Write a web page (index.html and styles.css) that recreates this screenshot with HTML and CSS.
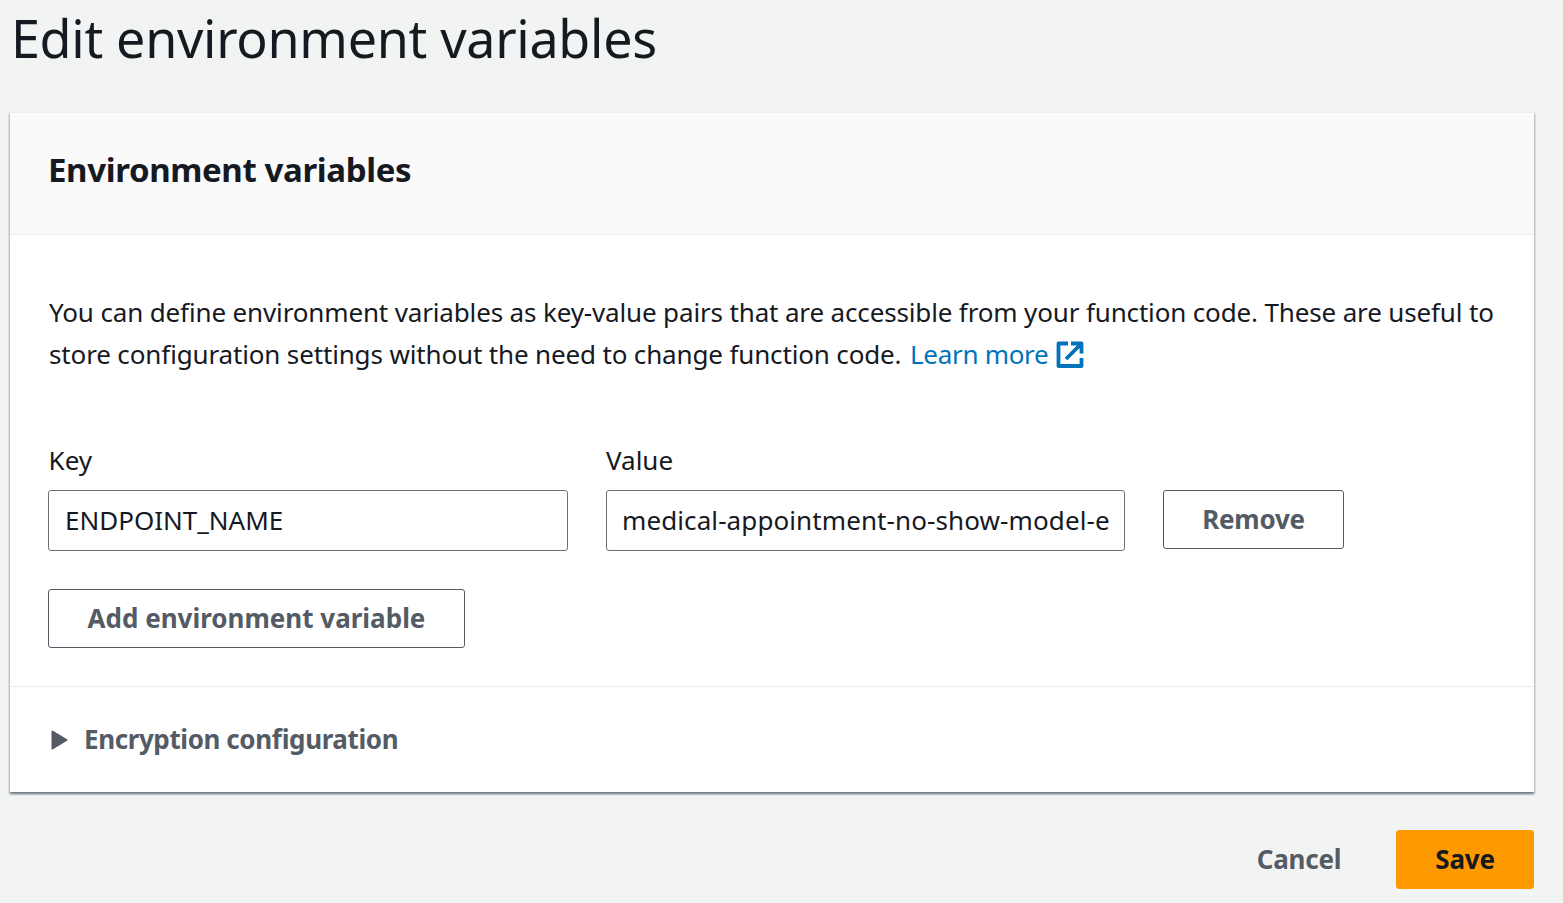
FILE: index.html
```html
<!DOCTYPE html>
<html lang="en">
<head>
<meta charset="utf-8">
<title>Edit environment variables</title>
<link rel="stylesheet" href="styles.css">
</head>
<body>
<main class="page">
  <h1 class="page-title">Edit environment variables</h1>
  <section class="card">
    <header class="card-header"><h2 class="card-title">Environment variables</h2></header>
    <div class="card-body">
      <p class="intro">You can define environment variables as key-value pairs that are accessible from your function code. These are useful to<br>store configuration settings without the need to change function code. <a class="link" href="#">Learn more</a><svg class="external" viewBox="0 0 28 28" aria-hidden="true"><path d="M12 2.5H2.5v22.5H25.5V17M15 2.5H25.5V12.5M25 3L10 18" fill="none" stroke="currentColor" stroke-width="3.8" stroke-linejoin="round"/></svg></p>
      <div class="row">
        <label class="field"><span class="label label-key">Key</span><input class="input" value="ENDPOINT_NAME"></label>
        <label class="field"><span class="label">Value</span><input class="input input-value" value="medical-appointment-no-show-model-e"></label>
        <button class="button remove">Remove</button>
      </div>
      <button class="button add">Add environment variable</button>
    </div>
    <div class="encryption"><svg class="caret" viewBox="0 0 17 20" aria-hidden="true"><path d="M1.5 1.5L15.5 10L1.5 18.5Z" fill="currentColor" stroke="currentColor" stroke-width="2" stroke-linejoin="round"/></svg><span class="encryption-label">Encryption configuration</span></div>
  </section>
  <footer class="actions"><button class="button cancel">Cancel</button><button class="button save">Save</button></footer>
</main>
</body>
</html>
```
FILE: styles.css
```css
* { box-sizing: border-box; }
body { margin: 0; background: #f2f3f3; color: #16191f; font-family: "Noto Sans", sans-serif; font-size: 26px; font-feature-settings: "liga" 1; overflow: hidden; }
.page { width: 1563px; height: 903px; padding: 0 29px 0 10px; }
.page-title { margin: 0; height: 112px; padding: 3px 0 0 1px; font-size: 52px; line-height: 70px; font-weight: 400; letter-spacing: -.3px; white-space: nowrap; }
.card { height: 680px; background: #fff; border-top: 1px solid #eaeded; box-shadow: 0 2px 2px rgba(0,28,36,.3), 1px 2px 2px rgba(0,28,36,.2), -1px 2px 2px rgba(0,28,36,.2); }
.card-header { height: 122px; padding: 34px 38px; background: #fafafa; border-bottom: 1px solid #eaeded; }
.card-title { margin: 0; font-size: 33px; line-height: 45px; font-weight: 700; letter-spacing: -.37px; white-space: nowrap; }
.card-body { height: 451px; padding: 56px 38px 0; }
.intro { margin: 0 0 64px; padding-left: 1px; line-height: 42px; height: 84px; letter-spacing: -.148px; white-space: nowrap; }
.link { color: #0073bb; text-decoration: none; letter-spacing: -.3px; margin-left: 2px; }
.external { width: 28px; height: 28px; color: #0073bb; margin-left: 8px; vertical-align: -5px; }
.row { display: flex; align-items: flex-end; gap: 38px; height: 112px; }
.field { display: block; width: 519px; }
.field:first-child { width: 520px; }
.label { display: block; height: 51px; padding-top: 2px; line-height: 38px; }
.label-key { padding-left: .6px; }
.input { display: block; width: 100%; height: 61px; padding: 0 14px 2px 16px; border: 1px solid #687078; border-radius: 3px; background: #fff; color: #16191f; font: 26px "Noto Sans", sans-serif; }
.input-value { padding-left: 15px; letter-spacing: .1px; }
.button { display: block; height: 59px; padding: 0 0 2px; border: 1px solid #545b64; border-radius: 3px; background: #fff; color: #545b64; font: 700 26px/38px "Noto Sans", sans-serif; white-space: nowrap; }
.remove { width: 181px; margin-bottom: 2px; letter-spacing: -.25px; }
.add { width: 417px; margin-top: 38px; }
.encryption { height: 106px; border-top: 1px solid #eaeded; padding-left: 41px; display: flex; align-items: center; color: #545b64; font-weight: 700; }
.encryption-label { padding-bottom: 1px; letter-spacing: -.4px; }
.caret { width: 17px; height: 20px; margin-right: 16px; }
.actions { display: flex; justify-content: flex-end; padding-top: 38px; gap: 36px; }
.cancel { width: 122px; border-color: transparent; background: transparent; letter-spacing: -.2px; }
.save { width: 138px; border-color: #f90; background: #f90; color: #16191f; letter-spacing: -.2px; }
```
